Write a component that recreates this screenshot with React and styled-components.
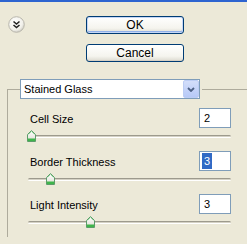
import React from 'react';
import styled, { createGlobalStyle } from 'styled-components';

// [ Styled Components >>>>>>>
const GlobalStyle = createGlobalStyle`
  html, body {
    margin: 0;
    padding: 0;
    background: #ece9d8;
    overflow: hidden;
  }

  body {
    font-family: "Liberation Sans", Arial, sans-serif;
    font-size: 11px;
    color: #000;
  }
`;

const Frame = styled.div`
  width: 247px;
  height: 244px;
  overflow: hidden;
`;

const TitleStrip = styled.div`
  height: 2px;
  background: #2e64d0;
`;

const Header = styled.div`
  display: flex;
  align-items: flex-start;
  padding: 14px 0 0 8px;
`;

const CollapseButton = styled.div`
  width: 17px;
  height: 17px;
  flex: none;

  svg {
    display: block;
  }
`;

const ButtonStack = styled.div`
  display: flex;
  flex-direction: column;
  gap: 10px;
  width: 98px;
  margin-left: 61px;
`;

const DialogButton = styled.button`
  box-sizing: border-box;
  height: 18px;
  padding: 0;

  font-family: inherit;
  font-size: 12px;
  line-height: 14px;
  color: #000;
  border: 1px solid #003c74;
  border-radius: 3px;
  background: linear-gradient(#ffffff, #f5f4ee 70%, #dcdad0);
  box-shadow: ${props =>
    props.$isDefault
      ? 'inset 0 0 0 1px #c6d7f6, inset 0 -1px 0 1px #91b0e8'
      : 'inset 0 -1px 0 0 #d6d0c4'};
`;

const Group = styled.fieldset`
  min-width: 0;
  margin: 17px 0 0 7px;
  padding: 9px 16px 0 12px;

  border: none;
  border-top: 1px solid #aeab9c;
  border-left: 1px solid #aeab9c;
`;

const Legend = styled.legend`
  padding: 0 2px 0 0;
`;

const Select = styled.div`
  box-sizing: border-box;
  display: flex;
  align-items: center;
  width: 180px;
  height: 20px;

  border: 1px solid #7f9db9;
  background: #fff;
`;

const SelectText = styled.span`
  flex: 1;
  padding-left: 3px;
  line-height: 18px;
`;

const SelectArrow = styled.span`
  box-sizing: border-box;
  display: flex;
  align-items: center;
  justify-content: center;
  width: 16px;
  height: 18px;

  border: 1px solid #bccdf4;
  border-radius: 2px;
  background: linear-gradient(#d3defa, #b7c9f7);
`;

const Param = styled.div`
  display: flex;
  flex-direction: column;
  padding-left: 8px;
  margin-bottom: 9px;
`;

const ParamHead = styled.div`
  display: flex;
  align-items: center;
  justify-content: space-between;
  height: 20px;
`;

const ParamLabel = styled.span`
  margin-left: 2px;
  padding-top: 1px;
`;

const ValueBox = styled.div`
  box-sizing: border-box;
  width: 32px;
  height: 20px;
  padding: 1px 0 0 2px;

  border: 1px solid #7f9db9;
  background: #fff;
`;

const Value = styled.span`
  display: inline-block;
  padding: 0 2px;
  line-height: 16px;
  color: ${props => (props.$selected ? '#fff' : '#000')};
  background: ${props => (props.$selected ? '#316ac5' : 'transparent')};
`;

const Slider = styled.div`
  position: relative;
  height: 12px;
  margin-top: 2px;
`;

const Track = styled.div`
  position: absolute;
  left: 0;
  right: 0;
  top: 5px;
  height: 3px;

  border-radius: 2px;
  background: linear-gradient(#9d9a8d 0, #9d9a8d 1px, #d4d1c4 1px, #d4d1c4 2px, #fff 2px);
`;

const Thumb = styled.div`
  position: absolute;
  top: 0;
  width: 9px;
  height: 12px;
  margin-left: -4px;

  svg {
    display: block;
  }
`;
// <<<<<<< Styled Components ]

const params = [
  { label: 'Cell Size', value: '2', pos: 3 },
  { label: 'Border Thickness', value: '3', pos: 22, selected: true },
  { label: 'Light Intensity', value: '3', pos: 62 }
];

const CollapseIcon = () => (
  <svg width="17" height="17" viewBox="0 0 17 17">
    <defs>
      <radialGradient id="collapseFill" cx="40%" cy="35%" r="70%">
        <stop offset="0%" stopColor="#ffffff" />
        <stop offset="70%" stopColor="#f1f0ea" />
        <stop offset="100%" stopColor="#c9c7bd" />
      </radialGradient>
    </defs>
    <circle cx="8.5" cy="8.5" r="7.8" fill="url(#collapseFill)" stroke="#b9b7ad" />
    <polyline points="5.5,5.5 8.5,8 11.5,5.5" fill="none" stroke="#222" strokeWidth="1.6" />
    <polyline points="5.5,9 8.5,11.5 11.5,9" fill="none" stroke="#222" strokeWidth="1.6" />
  </svg>
);

const ThumbIcon = () => (
  <svg width="9" height="12" viewBox="0 0 9 12">
    <defs>
      <linearGradient id="thumbFill" x1="0" y1="0" x2="0" y2="1">
        <stop offset="0%" stopColor="#ffffff" />
        <stop offset="100%" stopColor="#dedcd2" />
      </linearGradient>
    </defs>
    <polygon
      points="0.5,4.5 4.5,0.5 8.5,4.5 8.5,11.5 0.5,11.5"
      fill="url(#thumbFill)"
      stroke="#5c9c6a"
    />
    <rect x="1" y="8.5" width="7" height="2.5" fill="#3fb54b" />
    <polyline points="1.5,4.5 4.5,1.5 7.5,4.5" fill="none" stroke="#9fdca5" />
  </svg>
);

const App = () => (
  <Frame>
    <GlobalStyle />
    <TitleStrip />
    <Header>
      <CollapseButton>
        <CollapseIcon />
      </CollapseButton>
      <ButtonStack>
        <DialogButton $isDefault>OK</DialogButton>
        <DialogButton>Cancel</DialogButton>
      </ButtonStack>
    </Header>

    <Group>
      <Legend>
        <Select>
          <SelectText>Stained Glass</SelectText>
          <SelectArrow>
            <svg width="8" height="5" viewBox="0 0 8 5">
              <polyline points="1,1 4,4 7,1" fill="none" stroke="#4d6185" strokeWidth="1.8" />
            </svg>
          </SelectArrow>
        </Select>
      </Legend>

      {params.map(p => (
        <Param key={p.label}>
          <ParamHead>
            <ParamLabel>{p.label}</ParamLabel>
            <ValueBox>
              <Value $selected={p.selected}>{p.value}</Value>
            </ValueBox>
          </ParamHead>
          <Slider>
            <Track />
            <Thumb style={{ left: p.pos }}>
              <ThumbIcon />
            </Thumb>
          </Slider>
        </Param>
      ))}
    </Group>
  </Frame>
);

export default App;
